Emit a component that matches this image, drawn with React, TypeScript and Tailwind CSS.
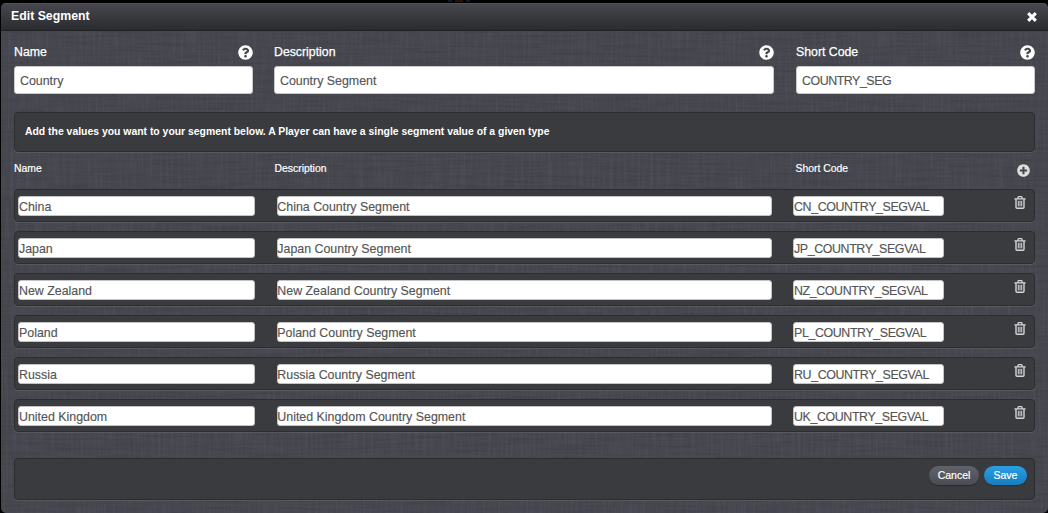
import React from 'react';
import { FaQuestionCircle, FaPlusCircle } from 'react-icons/fa';

const segments = [
  ['China', 'CN'],
  ['Japan', 'JP'],
  ['New Zealand', 'NZ'],
  ['Poland', 'PL'],
  ['Russia', 'RU'],
  ['United Kingdom', 'UK'],
];

function Linen() {
  return (
    <svg className="pointer-events-none absolute inset-0 h-full w-full opacity-35" aria-hidden="true">
      <filter id="warp" x="0" y="0" width="100%" height="100%" colorInterpolationFilters="sRGB">
        <feTurbulence type="fractalNoise" baseFrequency="0.4 0.02" numOctaves="2" seed="4" />
        <feColorMatrix values="0 0 0 0 1  0 0 0 0 1  0 0 0 0 1  0.3 0 0 0 -0.125" />
      </filter>
      <filter id="weft" x="0" y="0" width="100%" height="100%" colorInterpolationFilters="sRGB">
        <feTurbulence type="fractalNoise" baseFrequency="0.02 0.4" numOctaves="2" seed="9" />
        <feColorMatrix values="0 0 0 0 0  0 0 0 0 0  0 0 0 0 0  0.5 0 0 0 -0.21" />
      </filter>
      <rect width="100%" height="100%" filter="url(#warp)" />
      <rect width="100%" height="100%" filter="url(#weft)" />
    </svg>
  );
}

function Trash() {
  return (
    <svg viewBox="0 0 12 13" className="h-[13px] w-3" fill="none" stroke="#d6d6d7">
      <path d="M.4 2.9h11.2M4 2.5V1.3q0-.6.6-.6h2.8q.6 0 .6.6v1.2" strokeWidth="1.3" />
      <path d="M2 3v8.2q0 1 1 1h6q1 0 1-1V3" strokeWidth="1.4" />
      <path d="M4.3 4.8v5.6M6 4.8v5.6M7.7 4.8v5.6" strokeWidth="1" />
    </svg>
  );
}

function Field({ label, value, className }: { label: string; value: string; className: string }) {
  return (
    <div className={className}>
      <div className="flex h-[21px] items-center justify-between text-[12.3px] text-white [-webkit-text-stroke:0.25px_white]">
        <span>{label}</span>
        <FaQuestionCircle className="size-[15px]" />
      </div>
      <div
        className={`mt-[3px] flex h-[28px] items-center rounded-[3px] border border-[#c9c9cb] bg-white pt-[2px] pl-[5px] text-[12.4px] text-[#555] [-webkit-text-stroke:0.15px_#555] ${
          label === 'Short Code' ? 'tracking-[-0.45px]' : ''
        }`}
      >
        {value}
      </div>
    </div>
  );
}

const panel =
  'rounded-[4px] border border-[#2c2d30] bg-[#3a3b3f] shadow-[0_1px_0_rgba(255,255,255,0.1)]';
const input =
  'flex h-5 items-center rounded-[3px] border border-[#c4c4c6] bg-white pt-[2px] text-[12.4px] whitespace-nowrap text-[#555] [-webkit-text-stroke:0.15px_#555]';

export default function App() {
  return (
    <div className="h-[513px] w-[1048px] overflow-hidden bg-black font-['Liberation_Sans',Arial,sans-serif]">
      <div className="flex h-[3px] gap-[3px] pl-[448px]">
        <div className="h-[2px] w-1 bg-[#0c1c29]" />
        <div className="h-[2px] w-2 bg-[#25130a]" />
        <div className="h-[2px] w-1 bg-[#0c1c29]" />
      </div>
      <div className="relative ml-px h-[510px] overflow-hidden rounded-[5px] bg-[#46474f]">
        <Linen />
        <div className="relative">
          <header className="flex h-7 items-center justify-between border-b border-[#1f2023] bg-linear-to-b from-[#484850] to-[#2b2c2f] pr-[11px] pl-[10px] text-[12.3px] font-bold text-white shadow-[inset_0_1px_0_#53535b]">
            <span>Edit Segment</span>
            <svg viewBox="0 0 10 10" className="size-[10px]" stroke="white" strokeWidth="3.1">
              <path d="M1.2 1.2l7.6 7.6M8.8 1.2L1.2 8.8" />
            </svg>
          </header>

          <main className="pr-[13px] pl-[13px]">
            <div className="flex pt-[11px]">
              <Field label="Name" value="Country" className="w-[239px]" />
              <Field label="Description" value="Country Segment" className="ml-[21px] w-[500px]" />
              <Field label="Short Code" value="COUNTRY_SEG" className="ml-[22px] w-[239px]" />
            </div>

            <div className={`mt-[18px] flex h-10 items-center pl-[10px] text-[10.42px] font-bold text-white ${panel}`}>
              Add the values you want to your segment below. A Player can have a single segment value of a given type
            </div>

            <div className="flex h-[37px] text-[10.4px] text-white [-webkit-text-stroke:0.2px_white]">
              <span className="w-[260.5px] pt-[9px]">Name</span>
              <span className="w-[521px] pt-[9px]">Description</span>
              <span className="flex-1 pt-[9px]">Short Code</span>
              <FaPlusCircle className="mt-3 mr-[5px] size-[13px] text-[#dededf]" />
            </div>

            <div className="flex flex-col gap-[9px]">
              {segments.map(([name, code]) => (
                <div key={code} className={`flex h-[33px] pt-[6px] pl-[3px] ${panel}`}>
                  <div className={`w-[237px] ${input}`}>{name}</div>
                  <div className={`ml-[22px] w-[495px] ${input}`}>
                    <span className="-ml-[0.7px]">{name} Country Segment</span>
                  </div>
                  <div className={`ml-[21px] w-[151px] tracking-[-0.38px] ${input}`}>{code}_COUNTRY_SEGVAL</div>
                  <div className="mr-[8px] ml-auto">
                    <Trash />
                  </div>
                </div>
              ))}
            </div>

            <footer
              className={`mt-[26px] flex h-[42px] justify-end gap-[5px] pt-[7px] pr-[7px] text-[10.5px] text-white [-webkit-text-stroke:0.2px_white] ${panel}`}
            >
              <button className="h-[19px] w-[50px] rounded-full bg-linear-to-b from-[#62626a] to-[#4b4b53] shadow-[0_1px_1px_rgba(0,0,0,0.3)]">
                Cancel
              </button>
              <button className="h-[19px] w-[43px] rounded-full bg-linear-to-b from-[#2b9fe5] to-[#147dbd] shadow-[0_1px_1px_rgba(0,0,0,0.3)]">
                Save
              </button>
            </footer>
          </main>
        </div>
      </div>
    </div>
  );
}
